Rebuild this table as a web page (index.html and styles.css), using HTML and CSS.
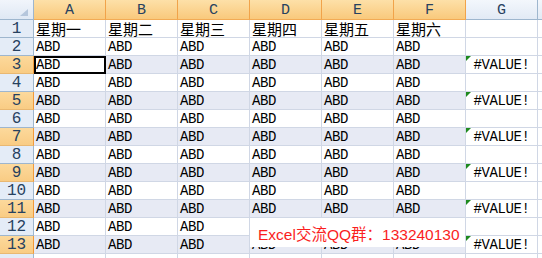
FILE: index.html
```html
<!DOCTYPE html>
<html>
<head>
<meta charset="utf-8">
<link rel="stylesheet" href="styles.css">
</head>
<body>
<div class="sheet">
  <div class="corner"><svg class="corner-tri" width="8" height="7" viewBox="0 0 8 7"><polygon points="8,0 8,7 0,7" fill="#b5c6dc"/></svg></div>
  <div class="ch on">A</div><div class="ch on">B</div><div class="ch on">C</div><div class="ch on">D</div><div class="ch on">E</div><div class="ch on">F</div><div class="ch">G</div><div class="ch end"></div>

  <div class="rh">1</div><div class="c zh">星期一</div><div class="c zh">星期二</div><div class="c zh">星期三</div><div class="c zh">星期四</div><div class="c zh">星期五</div><div class="c zh">星期六</div><div class="c"></div><div class="c end"></div>

  <div class="rh">2</div><div class="c">ABD</div><div class="c">ABD</div><div class="c">ABD</div><div class="c">ABD</div><div class="c">ABD</div><div class="c">ABD</div><div class="c"></div><div class="c end"></div>

  <div class="rh on">3</div><div class="c active">ABD</div><div class="c s">ABD</div><div class="c s">ABD</div><div class="c s">ABD</div><div class="c s">ABD</div><div class="c s">ABD</div><div class="c err"><span class="tri"></span>#VALUE!</div><div class="c end"></div>

  <div class="rh">4</div><div class="c">ABD</div><div class="c">ABD</div><div class="c">ABD</div><div class="c">ABD</div><div class="c">ABD</div><div class="c">ABD</div><div class="c"></div><div class="c end"></div>

  <div class="rh on">5</div><div class="c s">ABD</div><div class="c s">ABD</div><div class="c s">ABD</div><div class="c s">ABD</div><div class="c s">ABD</div><div class="c s">ABD</div><div class="c err"><span class="tri"></span>#VALUE!</div><div class="c end"></div>

  <div class="rh">6</div><div class="c">ABD</div><div class="c">ABD</div><div class="c">ABD</div><div class="c">ABD</div><div class="c">ABD</div><div class="c">ABD</div><div class="c"></div><div class="c end"></div>

  <div class="rh on">7</div><div class="c s">ABD</div><div class="c s">ABD</div><div class="c s">ABD</div><div class="c s">ABD</div><div class="c s">ABD</div><div class="c s">ABD</div><div class="c err"><span class="tri"></span>#VALUE!</div><div class="c end"></div>

  <div class="rh">8</div><div class="c">ABD</div><div class="c">ABD</div><div class="c">ABD</div><div class="c">ABD</div><div class="c">ABD</div><div class="c">ABD</div><div class="c"></div><div class="c end"></div>

  <div class="rh on">9</div><div class="c s">ABD</div><div class="c s">ABD</div><div class="c s">ABD</div><div class="c s">ABD</div><div class="c s">ABD</div><div class="c s">ABD</div><div class="c err"><span class="tri"></span>#VALUE!</div><div class="c end"></div>

  <div class="rh">10</div><div class="c">ABD</div><div class="c">ABD</div><div class="c">ABD</div><div class="c">ABD</div><div class="c">ABD</div><div class="c">ABD</div><div class="c"></div><div class="c end"></div>

  <div class="rh on">11</div><div class="c s">ABD</div><div class="c s">ABD</div><div class="c s">ABD</div><div class="c s">ABD</div><div class="c s">ABD</div><div class="c s">ABD</div><div class="c err"><span class="tri"></span>#VALUE!</div><div class="c end"></div>

  <div class="rh">12</div><div class="c">ABD</div><div class="c">ABD</div><div class="c">ABD</div><div class="c">ABD</div><div class="c">ABD</div><div class="c">ABD</div><div class="c"></div><div class="c end"></div>

  <div class="rh on">13</div><div class="c s">ABD</div><div class="c s">ABD</div><div class="c s">ABD</div><div class="c s">ABD</div><div class="c s">ABD</div><div class="c s">ABD</div><div class="c err"><span class="tri"></span>#VALUE!</div><div class="c end"></div>

  <div class="rh"></div><div class="c"></div><div class="c"></div><div class="c"></div><div class="c"></div><div class="c"></div><div class="c"></div><div class="c"></div><div class="c end"></div>

  <div class="mark">Excel交流QQ群：133240130</div>
</div>
</body>
</html>
```

FILE: styles.css
```css
html, body {
  margin: 0;
  padding: 0;
  background: #ffffff;
  overflow: hidden;
}

.sheet {
  position: relative;
  display: grid;
  grid-template-columns: 34px repeat(7, 72px) 1fr;
  grid-template-rows: 20px repeat(14, 18px);
  width: 542px;
  height: 258px;
  overflow: hidden;
  font-family: "Liberation Mono", "Cousine", "Courier New", "DejaVu Sans Mono", monospace;
  font-size: 14px;
  letter-spacing: -0.4px;
  color: #000000;
}

.sheet > div {
  box-sizing: border-box;
}

.corner {
  display: flex;
  align-items: flex-end;
  justify-content: flex-end;
  padding: 0 5px 3px 0;
  background: linear-gradient(#f1f5fb, #dfe8f4);
  border-right: 1px solid #9eb6ce;
  border-bottom: 1px solid #9eb6ce;
}

.corner-tri {
  display: block;
}

.ch {
  display: flex;
  align-items: center;
  justify-content: center;
  padding-top: 1px;
  font-size: 15px;
  letter-spacing: 0;
  color: #27415f;
  background: linear-gradient(#f3f7fc, #e2eaf5);
  border-right: 1px solid #9eb6ce;
  border-bottom: 1px solid #9eb6ce;
}

.ch.on {
  background: linear-gradient(#fde0a8, #f9c97c);
  border-right-color: #f1a34a;
  border-bottom-color: #f2ab55;
}

.ch.end {
  border-right: none;
}

.rh {
  display: flex;
  align-items: center;
  justify-content: center;
  font-size: 16px;
  letter-spacing: 0;
  color: #27415f;
  background: #e4ecf7;
  border-right: 1px solid #9eb6ce;
  border-bottom: 1px solid #9eb6ce;
}

.rh.on {
  background: linear-gradient(#fcd99c, #f9cc84);
  border-right-color: #f29a3a;
  border-bottom-color: #e9b872;
}

.c {
  display: flex;
  align-items: flex-end;
  padding: 0 0 1px 2px;
  line-height: 14px;
  white-space: nowrap;
  border-right: 1px solid #d0d7e5;
  border-bottom: 1px solid #d0d7e5;
}

.c.end {
  border-right: none;
}

.c.s {
  background: #e7eaf4;
}

.c.active {
  background: #ffffff;
  outline: 2px solid #000000;
  outline-offset: -2px;
}

.zh {
  font-family: "Noto Sans CJK SC", sans-serif;
  font-size: 15px;
  letter-spacing: 0;
  line-height: 17px;
  padding-bottom: 0;
}

.err {
  position: relative;
  justify-content: center;
  padding-left: 0;
}

.tri {
  position: absolute;
  left: 0;
  top: 0;
  width: 0;
  height: 0;
  border-top: 5px solid #1e8a1e;
  border-right: 5px solid transparent;
}

.mark {
  position: absolute;
  left: 250px;
  top: 218px;
  width: 215px;
  height: 29px;
  display: flex;
  align-items: center;
  padding-left: 8px;
  background: #ffffff;
  font-family: "Liberation Sans", "Noto Sans CJK SC", sans-serif;
  font-size: 15.5px;
  letter-spacing: 0;
  color: #fa1e1e;
}
```
